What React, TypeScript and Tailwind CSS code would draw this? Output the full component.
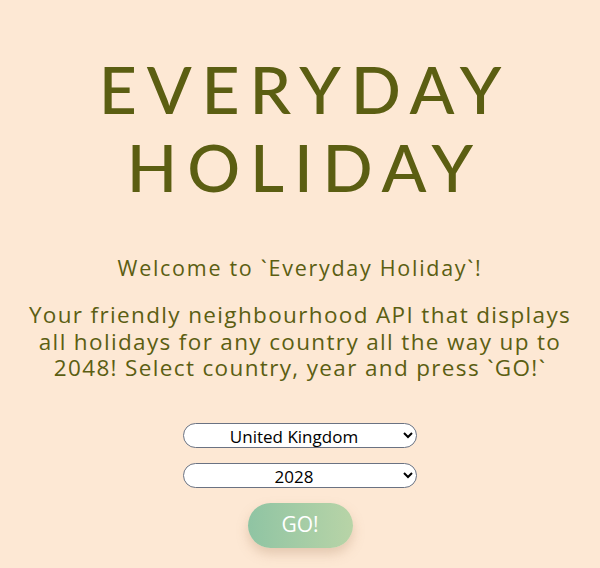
import { useState } from 'react'

const countries = ['United Kingdom', 'United States', 'France', 'Germany', 'Spain']
const years = Array.from({ length: 27 }, (_, i) => String(2022 + i))

export default function App() {
  const [country, setCountry] = useState('United Kingdom')
  const [year, setYear] = useState('2028')

  return (
    <div className="min-h-screen bg-[#fde8d4] text-[#5b5e12] flex flex-col items-center font-['Open_Sans',sans-serif]">
      <h1 className="mt-[50px] text-center font-['Lato',sans-serif] text-[66px] leading-[78px] tracking-[0.15em] font-medium pl-[0.15em]">
        EVERYDAY
        <br />
        HOLIDAY
      </h1>

      <p className="mt-[48px] text-[21.5px] leading-[28px] tracking-[0.08em] font-medium">Welcome to `Everyday Holiday`!</p>

      <p className="mt-[20px] text-center text-[22.5px] leading-[26.5px] tracking-[0.06em] font-medium">
        Your friendly neighbourhood API that displays
        <br />
        all holidays for any country all the way up to
        <br />
        2048! Select country, year and press `GO!`
      </p>

      <div className="mt-[41px] flex flex-col items-center gap-[15px]">
        <select
          value={country}
          onChange={(e) => setCountry(e.target.value)}
          className="w-[234px] h-[25px] rounded-full border border-gray-500 bg-white text-black text-[17px] [text-align-last:center] px-2"
        >
          {countries.map((c) => (
            <option key={c}>{c}</option>
          ))}
        </select>
        <select
          value={year}
          onChange={(e) => setYear(e.target.value)}
          className="w-[234px] h-[25px] rounded-full border border-gray-500 bg-white text-black text-[17px] [text-align-last:center] px-2"
        >
          {years.map((y) => (
            <option key={y}>{y}</option>
          ))}
        </select>
        <button className="w-[105px] h-[45px] rounded-full bg-gradient-to-r from-[#8fc4a3] to-[#b8d4a7] text-white text-[21px] shadow-[0_6px_12px_rgba(180,140,110,0.35)]">
          GO!
        </button>
      </div>
    </div>
  )
}
